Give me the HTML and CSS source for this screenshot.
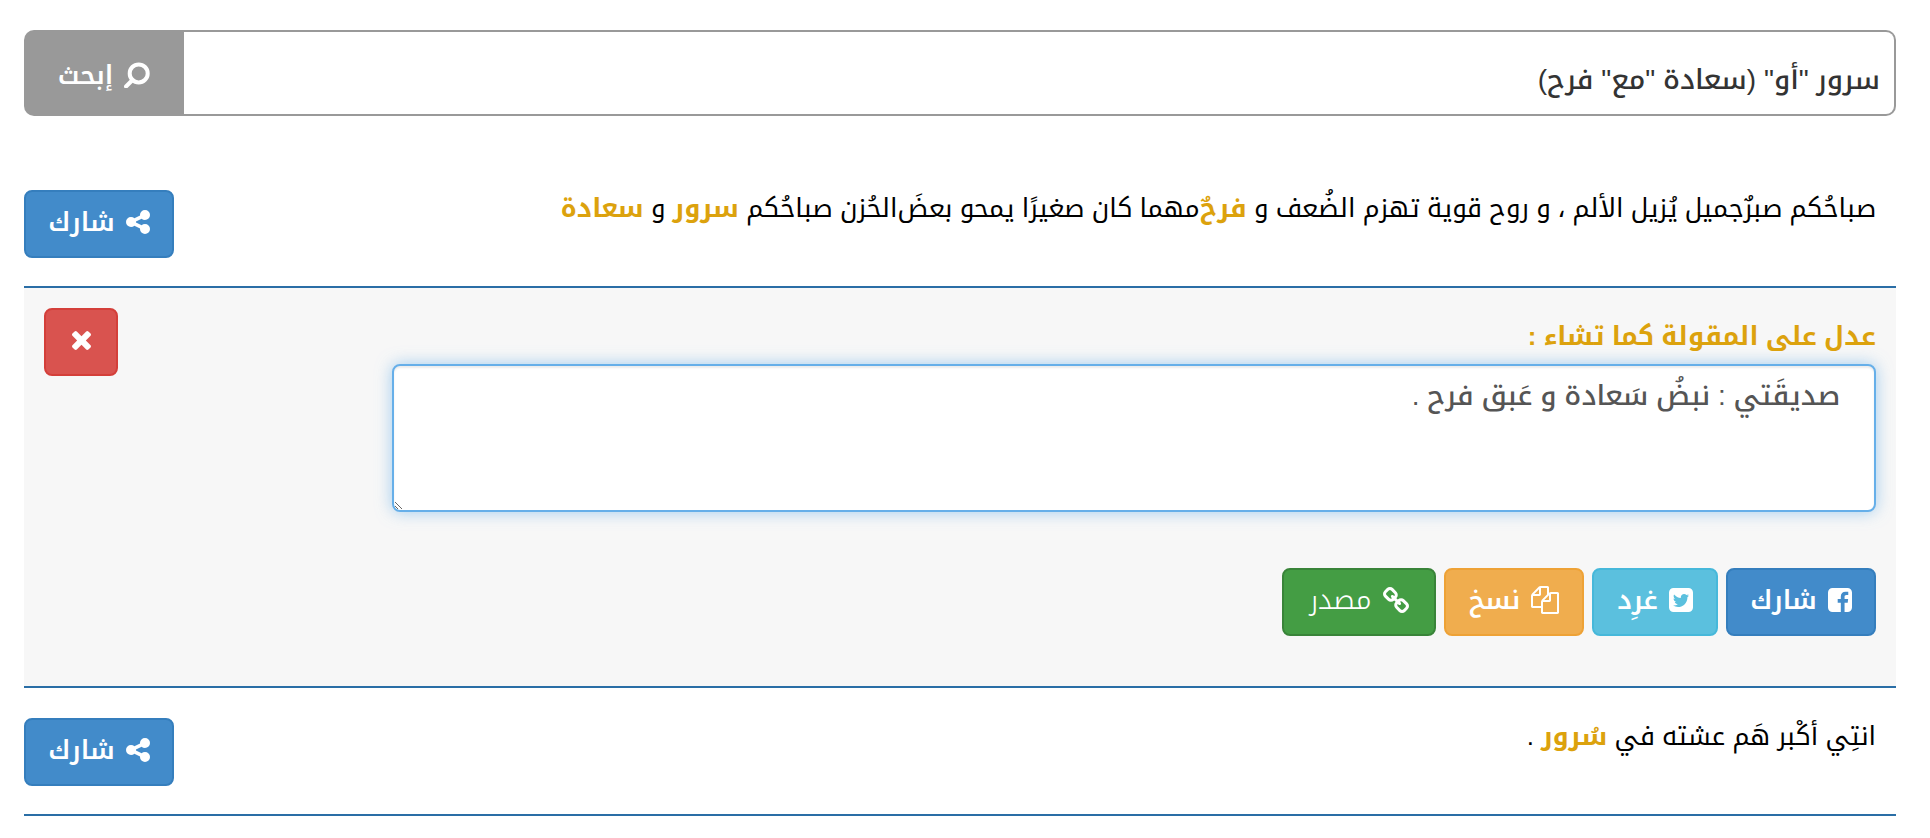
FILE: index.html
```
<!DOCTYPE html>
<html lang="ar" dir="rtl">
<head>
  <meta charset="UTF-8">
  <meta name="viewport" content="width=device-width, initial-scale=1">
  <title>إبحث</title>
  <link rel="stylesheet" href="styles.css">
</head>
<body>

<!-- Shared icons -->
<svg class="sprite" aria-hidden="true">
  <symbol id="icon-share" viewBox="0 128 1536 1536">
    <path d="M1216 1024q133 0 226.500 93.500t93.500 226.500-93.500 226.500-226.500 93.500-226.500-93.500-93.500-226.500q0-12 2-34l-360-180q-92 86-218 86-133 0-226.500-93.500t-93.500-226.500 93.500-226.500 226.500-93.500q126 0 218 86l360-180q-2-22-2-34 0-133 93.500-226.500t226.500-93.500 226.500 93.500 93.500 226.500-93.500 226.500-226.500 93.500q-126 0-218-86l-360 180q2 22 2 34t-2 34l360 180q92-86 218-86z"/>
  </symbol>
</svg>

<form class="search">
  <input type="text" class="search-input" aria-label="إبحث" value='سرور "أو" (سعادة "مع" فرح)'>
  <button type="submit" class="search-btn">
    <svg class="icon icon-link" viewBox="0 0 26 26"><circle cx="14.700" cy="11.400" r="9" fill="none" stroke="#fff" stroke-width="4"/><path d="M2 24.500L8.500 18" fill="none" stroke="#fff" stroke-width="4" stroke-linecap="round"/></svg>
    إبحث
  </button>
</form>

<main>
  <article class="quote">
    <p>صباحُكم صبرٌجميل يُزيل الألم ، و روح قوية تهزم الضُعف و <mark>فرحٌ</mark>&zwnj;مهما كان صغيرًا يمحو بعضَ&zwnj;الحُزن صباحُكم <mark>سرور</mark> و <mark>سعادة</mark></p>
    <button type="button" class="btn btn-primary"><svg class="icon"><use href="#icon-share"/></svg>شارك</button>
  </article>

  <section class="editor">
    <div class="editor-main">
      <label for="quoteText">عدل على المقولة كما تشاء :</label>
      <textarea id="quoteText">صديقَتي : نبضُ سَعادة و عَبق فرح .</textarea>
      <div class="actions">
        <button type="button" class="btn btn-primary">
          <svg class="icon" viewBox="0 128 1536 1536"><path d="M1248 128q119 0 203.500 84.500t84.500 203.500v960q0 119-84.500 203.500t-203.500 84.500h-188v-595h199l30-232h-229v-148q0-56 23.500-84t91.500-28l122-1v-207q-63-9-178-9-136 0-217.500 80t-81.500 226v171h-200v232h200v595h-532q-119 0-203.500-84.500t-84.500-203.500v-960q0-119 84.500-203.500t203.500-84.500h960z"/></svg>شارك
        </button>
        <button type="button" class="btn btn-info">
          <svg class="icon" viewBox="0 128 1536 1536"><path d="M1280 610q-56 25-121 34 68-40 93-117-65 38-134 51-61-66-153-66-87 0-148.500 61.500t-61.500 148.500q0 29 5 48-129-7-242-65t-192-155q-29 50-29 106 0 114 91 175-47-1-100-26v2q0 75 50 133.500t123 72.500q-29 8-51 8-13 0-39-4 21 63 74.500 104t121.500 42q-116 90-261 90-26 0-50-3 148 94 322 94 112 0 210-35.500t168-95 120.500-137 75-162 24.500-168.500q0-18-1-27 63-45 105-109zm256-194v960q0 119-84.500 203.500t-203.500 84.500h-960q-119 0-203.500-84.500t-84.500-203.500v-960q0-119 84.500-203.500t203.500-84.500h960q119 0 203.500 84.500t84.500 203.500z"/></svg>غرِد
        </button>
        <button type="button" class="btn btn-warning">
          <svg class="icon icon-copy" viewBox="0 0 1792 1792"><path d="M1696 384q40 0 68 28t28 68v1216q0 40-28 68t-68 28h-960q-40 0-68-28t-28-68v-288h-544q-40 0-68-28t-28-68v-672q0-40 20-88t48-76l408-408q28-28 76-48t88-20h416q40 0 68 28t28 68v328q68-40 128-40h416zm-544 213l-299 299h299v-299zm-640-384l-299 299h299v-299zm196 647l316-316v-416h-384v416q0 40-28 68t-68 28h-416v640h512v-256q0-40 20-88t48-76zm956 804v-1152h-384v416q0 40-28 68t-68 28h-416v640h896z"/></svg>نسخ
        </button>
        <a href="#" class="btn btn-success">
          <svg class="icon icon-link" viewBox="16 16 1632 1632"><path d="M1456 1216q0-40-28-68l-208-208q-28-28-68-28-42 0-72 32 3 3 19 18.500t21.500 21.500 15 19 13 25.500 3.500 27.500q0 40-28 68t-68 28q-15 0-27.500-3.500t-25.500-13-19-15-21.500-21.500-18.500-19q-33 31-33 73 0 40 28 68l206 207q27 27 68 27 40 0 68-26l147-146q28-28 28-67zm-703-705q0-40-28-68l-206-207q-28-28-68-28-39 0-68 27l-147 146q-28 28-28 67 0 40 28 68l208 208q27 27 68 27 42 0 72-31-3-3-19-18.500t-21.500-21.500-15-19-13-25.500-3.500-27.500q0-40 28-68t68-28q15 0 27.500 3.500t25.500 13 19 15 21.500 21.500 18.500 19q33-31 33-73zm895 705q0 120-85 203l-147 146q-83 83-203 83-121 0-204-85l-206-207q-83-83-83-203 0-123 88-209l-88-88q-86 88-208 88-120 0-204-84l-208-208q-84-84-84-204t85-203l147-146q83-83 203-83 121 0 204 85l206 207q83 83 83 203 0 123-88 209l88 88q86-88 208-88 120 0 204 84l208 208q84 84 84 204z"/></svg>مصدر
        </a>
      </div>
    </div>
    <button type="button" class="btn btn-danger" aria-label="إغلاق">
      <svg class="icon icon-close" viewBox="110 366 1188 1188"><path d="M1298 1322q0 40-28 68l-136 136q-28 28-68 28t-68-28l-294-294-294 294q-28 28-68 28t-68-28l-136-136q-28-28-28-68t28-68l294-294-294-294q-28-28-28-68t28-68l136-136q28-28 68-28t68 28l294 294 294-294q28-28 68-28t68 28l136 136q28 28 28 68t-28 68l-294 294 294 294q28 28 28 68z"/></svg>
    </button>
  </section>

  <article class="quote">
    <p>انتِي أكْبر هَم عشته في <mark>سُرور</mark> .</p>
    <button type="button" class="btn btn-primary"><svg class="icon"><use href="#icon-share"/></svg>شارك</button>
  </article>
</main>

</body>
</html>
```

FILE: styles.css
```
* { margin: 0; padding: 0; box-sizing: border-box; }

body {
  font-family: "Liberation Sans", "Droid Arabic Kufi", "Noto Kufi Arabic", sans-serif;
  font-size: 26px;
  line-height: 36px;
  color: #000;
  background: #fff;
  padding: 30px 34px 30px 24px;
}

button, input, textarea {
  font: inherit;
}

.sprite {
  display: none;
}

.search {
  display: flex;
  height: 86px;
  margin-bottom: 44px;
}

.search-input {
  flex: 1;
  min-width: 0;
  padding: 14px 14px 0;
  border: 2px solid #999;
  border-left: none;
  border-radius: 0 10px 10px 0;
  color: #333;
  font-size: 28px;
  font-weight: 500;
}

.search-btn {
  display: flex;
  align-items: center;
  justify-content: center;
  gap: 11px;
  width: 160px;
  padding-top: 4px;
  border: none;
  border-radius: 10px 0 0 10px;
  background: #999;
  color: #fff;
  font-weight: 600;
  cursor: pointer;
}

.quote {
  display: flex;
  justify-content: space-between;
  align-items: flex-start;
  gap: 20px;
  padding: 30px 20px 28px 0;
  border-bottom: 2px solid #2a6ea6;
}

mark {
  background: none;
  color: #dca20d;
  font-weight: bold;
}

.btn {
  display: flex;
  align-items: center;
  justify-content: center;
  gap: 11px;
  flex-shrink: 0;
  height: 68px;
  padding: 0 8px 4px;
  border: 2px solid;
  border-radius: 8px;
  color: #fff;
  font-weight: 600;
  text-decoration: none;
  cursor: pointer;
}

.btn-primary { background: #428bca; border-color: #357ebd; width: 150px; }
.btn-info { background: #5bc0de; border-color: #46b8da; width: 126px; }
.btn-warning { background: #f0ad4e; border-color: #eea236; width: 140px; }
.btn-success { background: #449d44; border-color: #398439; width: 154px; font-size: 28px; font-weight: 300; }
.btn-danger { background: #d9534f; border-color: #d43f3a; width: 74px; }

.icon {
  width: 24px;
  height: 24px;
  flex-shrink: 0;
  fill: #fff;
}

.icon-link { width: 26px; height: 26px; }
.icon-copy { width: 28px; height: 28px; }
.icon-close { width: 19px; height: 19px; }

.editor {
  display: flex;
  justify-content: space-between;
  align-items: flex-start;
  padding: 20px 20px 50px;
  background: #f7f7f7;
  border-bottom: 2px solid #2a6ea6;
}

.editor-main {
  width: 81%;
}

.editor label {
  display: block;
  padding: 10px 0;
  color: #dca20d;
  font-weight: bold;
}

.editor textarea {
  display: block;
  width: 100%;
  height: 148px;
  padding: 12px 34px;
  border: 2px solid #66afe9;
  border-radius: 8px;
  outline: none;
  background: #fff;
  box-shadow: inset 0 2px 2px rgba(0, 0, 0, 0.08), 0 0 16px rgba(102, 175, 233, 0.6);
  color: #555;
  font-size: 28px;
  font-weight: 500;
  resize: both;
}

.actions {
  display: flex;
  flex-wrap: wrap;
  gap: 8px;
  margin-top: 56px;
}
```
